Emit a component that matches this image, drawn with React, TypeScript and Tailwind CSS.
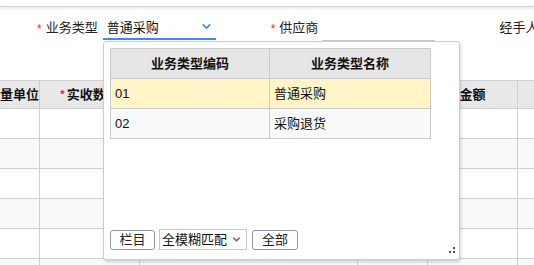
import { ChevronDown } from 'lucide-react';

const cjk = '[font-family:"Liberation_Sans","Noto_Sans_CJK_SC",sans-serif]';

const gridCols = [
  { w: 'w-[40px]', title: '计量单位', align: 'justify-end' },
  { w: 'w-[100px]', title: '实收数量', req: true, align: 'justify-center' },
  { w: 'w-[218px]', title: '单价', align: 'justify-center' },
  { w: 'w-[70px]', title: '税率', align: 'justify-center' },
  { w: 'w-[90px]', title: '金额', align: 'justify-center' },
  { w: 'w-[60px]', title: '备注', align: 'justify-center' },
];

const options = [
  { code: '01', name: '普通采购', active: true },
  { code: '02', name: '采购退货' },
];

function FormField({ label, required, children, className }: {
  label: string;
  required?: boolean;
  children?: React.ReactNode;
  className?: string;
}) {
  return (
    <div className={`flex items-center shrink-0 whitespace-nowrap ${className ?? ''}`}>
      {required && <span className="text-[#ff2020] text-[12px] mr-[4px] mt-[2px]">*</span>}
      <span className="text-[13px] text-[#222]">{label}</span>
      {children}
    </div>
  );
}

function TypePopup() {
  return (
    <div className="absolute left-[103px] top-[41px] w-[357px] h-[219px] bg-white border border-[#c6cde2] rounded-[3px] shadow-[1px_2px_3px_rgba(120,130,160,0.35)] flex flex-col px-[6px] pt-[6px] pb-[9px]">
      <table className="w-[321px] border-collapse text-[13px]">
        <thead>
          <tr className="h-[30px] bg-[#e6e6e6]">
            <th className="w-[159px] border border-[#cacaca] font-bold text-[#111]">业务类型编码</th>
            <th className="border border-[#cacaca] font-bold text-[#111]">业务类型名称</th>
          </tr>
        </thead>
        <tbody>
          {options.map((o) => (
            <tr key={o.code} className={`h-[30px] ${o.active ? 'bg-[#fff5c8]' : 'bg-[#f9f9f9]'}`}>
              <td className="border border-[#cacaca] pl-[4px] text-[#111]">{o.code}</td>
              <td className="border border-[#cacaca] pl-[4px] text-[#111]">{o.name}</td>
            </tr>
          ))}
        </tbody>
      </table>
      <div className="flex-1" />
      <div className="flex items-center gap-[4px] text-[13px]">
        <button className="w-[45px] h-[20px] border border-[#8c98aa] rounded-[3px] bg-white text-[#222] leading-none">栏目</button>
        <div className="w-[88px] h-[21px] border border-[#c4c4c4] bg-white flex items-center pl-[2px] text-[#111]">
          <span className="flex-1">全模糊匹配</span>
          <ChevronDown size={11} strokeWidth={3.5} className="text-[#777] mr-[4px]" />
        </div>
        <button className="w-[46px] h-[20px] border border-[#8c98aa] rounded-[3px] bg-white text-[#222] leading-none ml-[1px]">全部</button>
      </div>
      <div className="absolute right-[4px] bottom-[6px] w-[6px] h-[6px]">
        <span className="absolute right-0 top-0 w-[2px] h-[2px] bg-[#555]" />
        <span className="absolute right-0 bottom-0 w-[2px] h-[2px] bg-[#555]" />
        <span className="absolute left-0 bottom-0 w-[2px] h-[2px] bg-[#555]" />
      </div>
    </div>
  );
}

export default function App() {
  return (
    <div className={`relative w-[534px] h-[265px] bg-white overflow-hidden ${cjk}`}>
      <div className="h-[7px] border-b border-[#d2d2d2] shadow-[0_2px_3px_rgba(0,0,0,0.08)]" />

      <div className="h-[73px] flex pt-[12px]">
        <FormField label="业务类型" required className="ml-[37px] h-[18px]">
          <div className="ml-[5px] w-[113px] h-[20px] border-b-2 border-[#3d8af7] flex items-center pl-[4px] pb-[1px] mt-[3px]">
            <span className="flex-1 text-[13px] text-[#111]">普通采购</span>
            <ChevronDown size={13} strokeWidth={3} className="text-[#3d8af7] mr-[3px] -mt-[4px]" />
          </div>
        </FormField>
        <FormField label="供应商" required className="ml-[55px] h-[18px]">
          <div className="ml-[4px] w-[113px] h-[21px] border-b border-[#c8c8c8] mt-[4px]" />
        </FormField>
        <FormField label="经手人" className="ml-[64px] h-[18px]" />
      </div>

      <div className="flex flex-col">
        <div className="flex h-[29px] bg-[#e8e8e8] border-y border-[#d0d0d0]">
          {gridCols.map((c) => (
            <div key={c.title} className={`${c.w} shrink-0 border-r border-[#cfcfcf] flex items-center overflow-hidden whitespace-nowrap ${c.align} text-[13px] font-bold text-[#111]`}>
              {c.req && <span className="text-[#ff2020] text-[11px] mr-[2px]">*</span>}
              {c.title}
            </div>
          ))}
        </div>
        {[0, 1, 2, 3, 4, 5].map((r) => (
          <div key={r} className={`flex h-[30px] border-b border-[#cfcfcf] ${r % 2 ? 'bg-[#f9f9f9]' : 'bg-white'}`}>
            {gridCols.map((c) => (
              <div key={c.title} className={`${c.w} shrink-0 border-r border-[#cfcfcf]`} />
            ))}
          </div>
        ))}
      </div>

      <TypePopup />
    </div>
  );
}
